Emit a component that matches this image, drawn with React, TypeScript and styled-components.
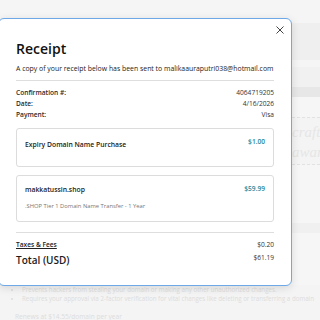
import React from "react";
import styled, { createGlobalStyle } from "styled-components";

const GlobalStyle = createGlobalStyle`
  html, body {
    margin: 0;
    padding: 0;
    width: 320px;
    height: 320px;
    overflow: hidden;
    background: #f4f4f4;
    font-family: "Open Sans", "Liberation Sans", sans-serif;
  }
`;

const Page = styled.div`
  position: relative;
  width: 320px;
  height: 320px;
  overflow: hidden;
  background: #f4f4f4;
`;

const Backdrop = styled.div`
  display: flex;
  flex-direction: column;
  width: 100%;
  height: 100%;
`;

const Band = styled.div<{ $h: number; $bg: string }>`
  height: ${(p) => p.$h}px;
  background: ${(p) => p.$bg};
  flex-shrink: 0;
`;

const Quote = styled.div`
  height: 48px;
  margin-left: 292px;
  border-top: 1px dashed #e2e2e2;
  border-bottom: 1px dashed #e2e2e2;
  font-family: "Liberation Serif", serif;
  font-style: italic;
  font-size: 15px;
  line-height: 20px;
  color: #e6e6e6;
  padding-top: 4px;
  box-sizing: border-box;
  flex-shrink: 0;
  overflow: hidden;
  white-space: nowrap;
`;

const Bullets = styled.ul`
  margin: 0;
  padding: 0 0 0 22px;
  font-size: 6.2px;
  line-height: 9px;
  color: #dcdcdc;
  white-space: nowrap;
`;

const Renews = styled.div`
  padding-left: 15px;
  margin-top: 9px;
  font-size: 6.6px;
  line-height: 9px;
  color: #dcdcdc;
`;

const Modal = styled.div`
  position: absolute;
  left: -2px;
  top: 18px;
  width: 294px;
  height: 268px;
  box-sizing: border-box;
  background: #fff;
  border: 1.5px solid #6ea8e6;
  border-radius: 6px;
  box-shadow: 0 2px 8px rgba(0, 0, 0, 0.12);
  padding: 21px 17px 0 17px;
  color: #1b1b1b;
`;

const Close = styled.button`
  position: absolute;
  top: 6px;
  right: 6px;
  width: 10px;
  height: 10px;
  padding: 0;
  border: none;
  background: none;
  display: flex;
  align-items: center;
  justify-content: center;
`;

const Title = styled.h1`
  margin: 0;
  font-size: 14px;
  line-height: 18px;
  font-weight: 600;
  color: #111;
`;

const Sub = styled.p`
  margin: 6px 0 0;
  font-size: 6.9px;
  line-height: 10px;
  color: #222;
  white-space: nowrap;
`;

const Divider = styled.hr<{ $mt: number }>`
  margin: ${(p) => p.$mt}px 0 0;
  border: none;
  border-top: 1px solid #dedede;
`;

const Rows = styled.div`
  margin-top: 6px;
  display: flex;
  flex-direction: column;
`;

const Row = styled.div`
  display: flex;
  justify-content: space-between;
  font-size: 6.6px;
  line-height: 11px;
`;

const Label = styled.span`
  font-weight: 600;
  color: #2a2a2a;
`;

const Value = styled.span`
  color: #333;
  font-size: 6.6px;
`;

const Cards = styled.div`
  margin-top: 8px;
  display: flex;
  flex-direction: column;
  gap: 8px;
`;

const Card = styled.div<{ $h: number }>`
  height: ${(p) => p.$h}px;
  box-sizing: border-box;
  border: 1px solid #dcdcdc;
  border-radius: 3px;
  padding: 8px 8px 0 8px;
  display: flex;
  flex-direction: column;
`;

const CardHead = styled.div`
  display: flex;
  justify-content: space-between;
  align-items: flex-start;
`;

const ItemName = styled.span<{ $drop: number }>`
  font-size: 6.8px;
  font-weight: 600;
  line-height: 10px;
  margin-top: ${(p) => p.$drop}px;
  color: #222;
`;

const Price = styled.span`
  font-size: 6.6px;
  font-weight: 600;
  line-height: 10px;
  color: #23879a;
`;

const ItemSub = styled.span`
  margin-top: 7px;
  font-size: 5.8px;
  line-height: 8px;
  color: #777;
`;

const Totals = styled.div`
  margin-top: 6px;
  display: flex;
  flex-direction: column;
`;

const TaxLabel = styled.span`
  font-size: 6.6px;
  font-weight: 600;
  text-decoration: underline;
  color: #222;
`;

const TotalRow = styled.div`
  display: flex;
  justify-content: space-between;
  align-items: flex-start;
  margin-top: 3px;
`;

const TotalLabel = styled.span`
  font-size: 10px;
  font-weight: 600;
  line-height: 14px;
  color: #1b1b1b;
`;

const App: React.FC = () => {
  return (
    <>
      <GlobalStyle />
      <Page>
        <Backdrop>
          <Band $h={23} $bg="#f5f5f5" />
          <Band $h={37} $bg="#efefef" />
          <Band $h={7} $bg="#f5f5f5" />
          <Band $h={20} $bg="#f1f1f1" />
          <Band $h={10} $bg="#e7e7e7" />
          <Band $h={20} $bg="#f6f6f6" />
          <Quote>
            crafted
            <br />
            aware
          </Quote>
          <Band $h={58} $bg="#f6f6f6" />
          <Band $h={10} $bg="#f0f0f0" />
          <Band $h={52} $bg="#f6f6f6" />
          <Bullets>
            <li>Prevents hackers from stealing your domain or making any other unauthorized changes.</li>
            <li>Requires your approval via 2-factor verification for vital changes like deleting or transferring a domain</li>
          </Bullets>
          <Renews>Renews at $14.55/domain per year</Renews>
        </Backdrop>

        <Modal>
          <Close aria-label="Close">
            <svg width="8" height="8" viewBox="0 0 8 8">
              <path d="M0.5 0.5 L7.5 7.5 M7.5 0.5 L0.5 7.5" stroke="#444" strokeWidth="1" />
            </svg>
          </Close>
          <Title>Receipt</Title>
          <Sub>A copy of your receipt below has been sent to malikaauraputri038@hotmail.com</Sub>
          <Divider $mt={6} />
          <Rows>
            <Row>
              <Label>Confirmation #:</Label>
              <Value>4064719205</Value>
            </Row>
            <Row>
              <Label>Date:</Label>
              <Value>4/16/2026</Value>
            </Row>
            <Row>
              <Label>Payment:</Label>
              <Value>Visa</Value>
            </Row>
          </Rows>
          <Cards>
            <Card $h={39}>
              <CardHead>
                <ItemName $drop={3}>Expiry Domain Name Purchase</ItemName>
                <Price>$1.00</Price>
              </CardHead>
            </Card>
            <Card $h={47}>
              <CardHead>
                <ItemName $drop={1}>makkatussin.shop</ItemName>
                <Price>$59.99</Price>
              </CardHead>
              <ItemSub>.SHOP Tier 1 Domain Name Transfer - 1 Year</ItemSub>
            </Card>
          </Cards>
          <Divider $mt={10} />
          <Totals>
            <Row>
              <TaxLabel>Taxes &amp; Fees</TaxLabel>
              <Value>$0.20</Value>
            </Row>
            <TotalRow>
              <TotalLabel>Total (USD)</TotalLabel>
              <Value>$61.19</Value>
            </TotalRow>
          </Totals>
        </Modal>
      </Page>
    </>
  );
};

export default App;
